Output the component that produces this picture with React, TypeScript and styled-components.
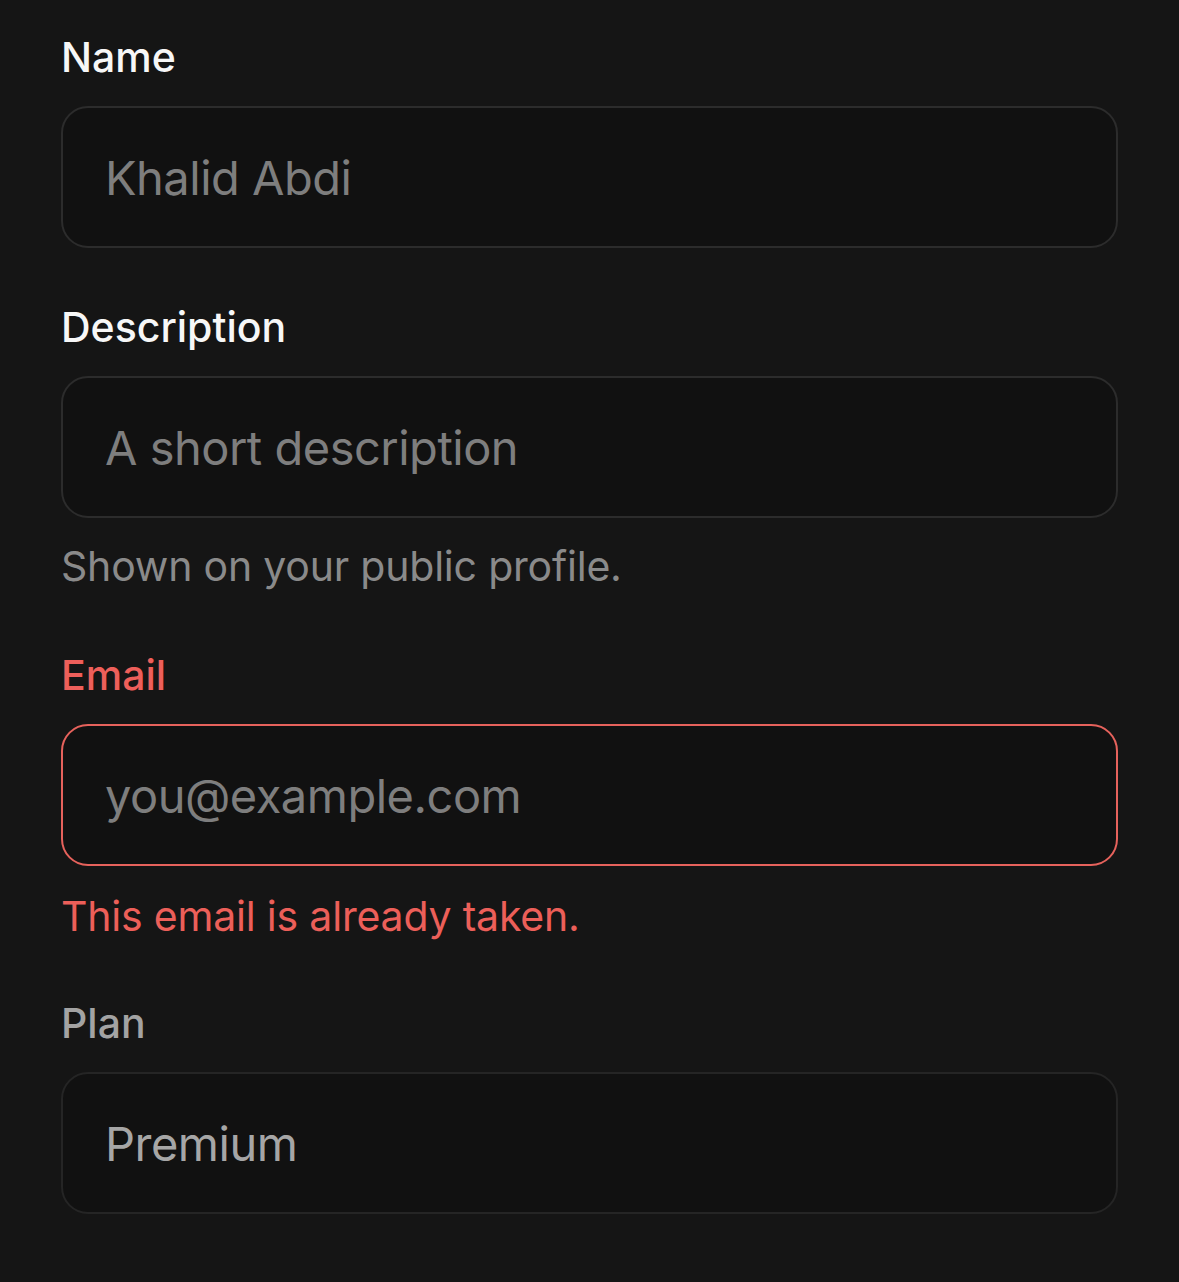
import { createGlobalStyle, styled } from "styled-components";

const GlobalStyle = createGlobalStyle`
  html, body {
    margin: 0;
    padding: 0;
    background: #151515;
  }
  body {
    font-family: Inter, "Noto Sans", "Liberation Sans", sans-serif;
    -webkit-font-smoothing: antialiased;
  }
`;

const Form = styled.form`
  display: flex;
  flex-direction: column;
  gap: 54px;
  padding: 32px 61px 60px;
`;

const Field = styled.div`
  display: flex;
  flex-direction: column;
`;

const Label = styled.label<{ $tone?: "error" | "disabled" }>`
  font-size: 41px;
  line-height: 50px;
  font-weight: 500;
  letter-spacing: 0;
  color: ${(p) =>
    p.$tone === "error" ? "#ee5f5a" : p.$tone === "disabled" ? "#a3a3a3" : "#f7f7f7"};
  margin-bottom: 24px;
`;

const Input = styled.input<{ $invalid?: boolean }>`
  box-sizing: border-box;
  width: 100%;
  height: 142px;
  padding: 0 42px;
  border-radius: 27px;
  border: 2.5px solid ${(p) => (p.$invalid ? "#e6625c" : "#2c2c2c")};
  background: #111111;
  font-family: inherit;
  font-size: 47px;
  letter-spacing: -0.5px;
  color: #f0f0f0;
  outline: none;

  &::placeholder {
    color: #7e7e7e;
  }

  &:disabled {
    border-color: #252525;
    color: #a6a6a6;
    -webkit-text-fill-color: #a6a6a6;
    opacity: 1;
  }
`;

const Note = styled.p<{ $error?: boolean }>`
  margin: ${(p) => (p.$error ? "25px 0 3px" : "23px 0 5px")};
  font-size: 41px;
  line-height: 50px;
  letter-spacing: -0.2px;
  color: ${(p) => (p.$error ? "#ec5f59" : "#8a8a8a")};
`;

export default function App() {
  return (
    <>
      <GlobalStyle />
      <Form onSubmit={(e) => e.preventDefault()}>
        <Field>
          <Label htmlFor="name">Name</Label>
          <Input id="name" placeholder="Khalid Abdi" />
        </Field>

        <Field>
          <Label htmlFor="description">Description</Label>
          <Input id="description" placeholder="A short description" />
          <Note>Shown on your public profile.</Note>
        </Field>

        <Field>
          <Label htmlFor="email" $tone="error">Email</Label>
          <Input id="email" placeholder="you@example.com" $invalid />
          <Note $error>This email is already taken.</Note>
        </Field>

        <Field>
          <Label htmlFor="plan" $tone="disabled">Plan</Label>
          <Input id="plan" value="Premium" disabled readOnly />
        </Field>
      </Form>
    </>
  );
}
